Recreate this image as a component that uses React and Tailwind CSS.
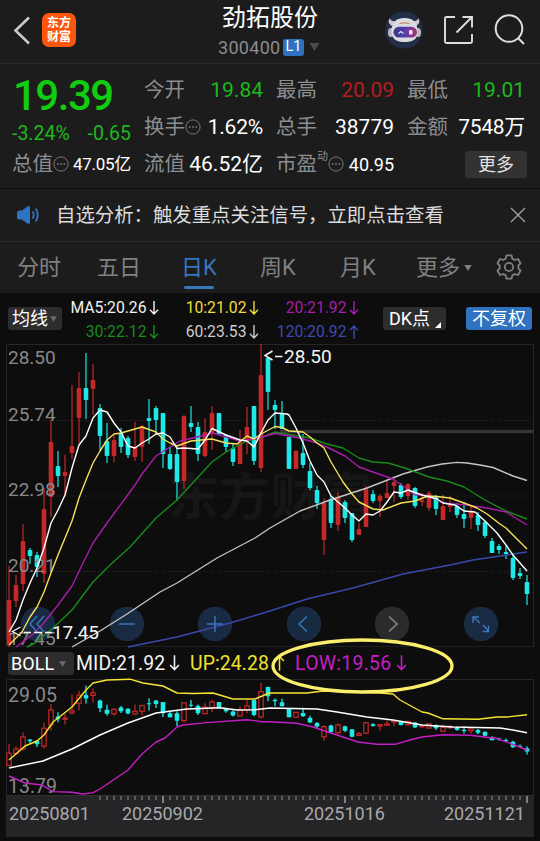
import { Fragment } from 'react';

// --- Data: 日K [direction, high, low, bodyTop, bodyBottom] in chart units ---
const CANDLES = [
  ['u', 566, 647, 600, 645], ['u', 575, 607, 585, 601], ['u', 524, 591, 541, 584], ['d', 548, 564, 550, 556],
  ['d', 552, 577, 555, 567], ['u', 488, 583, 509, 574], ['u', 420, 517, 442, 497], ['d', 451, 487, 466, 476],
  ['u', 455, 495, 472, 476], ['u', 385, 459, 446, 453], ['u', 372, 443, 388, 418], ['d', 353, 419, 388, 400],
  ['u', 364, 415, 380, 389], ['d', 404, 450, 408, 436], ['d', 423, 463, 441, 456], ['u', 435, 462, 440, 456],
  ['d', 428, 453, 433, 447], ['d', 436, 458, 438, 455], ['u', 422, 461, 447, 457], ['u', 425, 462, 426, 447],
  ['d', 399, 444, 418, 421], ['d', 406, 435, 408, 420], ['d', 413, 468, 413, 454], ['d', 447, 470, 454, 469],
  ['d', 447, 501, 454, 482], ['u', 415, 489, 416, 481], ['d', 406, 432, 423, 427], ['d', 422, 461, 427, 454],
  ['u', 418, 457, 432, 456], ['u', 406, 450, 413, 433], ['d', 413, 435, 413, 434], ['d', 434, 452, 435, 447],
  ['d', 443, 466, 448, 462], ['u', 430, 464, 442, 464], ['u', 407, 454, 427, 441], ['d', 406, 465, 406, 461],
  ['u', 344, 472, 375, 468], ['d', 357, 410, 358, 392], ['d', 400, 429, 405, 410], ['d', 401, 429, 414, 429],
  ['d', 437, 469, 437, 469], ['u', 450, 469, 451, 469], ['d', 434, 468, 453, 465], ['d', 463, 490, 471, 488],
  ['d', 486, 509, 490, 503], ['u', 498, 555, 503, 540], ['d', 496, 528, 499, 523], ['u', 492, 531, 497, 525],
  ['d', 500, 523, 502, 518], ['d', 513, 542, 513, 540], ['u', 523, 535, 529, 535], ['u', 486, 527, 489, 527],
  ['d', 490, 503, 494, 501], ['u', 494, 517, 496, 501], ['u', 480, 498, 493, 498], ['u', 479, 502, 482, 486],
  ['d', 483, 499, 485, 497], ['u', 483, 500, 484, 496], ['d', 487, 508, 488, 506], ['u', 493, 506, 500, 502],
  ['u', 491, 511, 493, 508], ['d', 495, 515, 497, 509], ['u', 495, 520, 506, 520], ['u', 496, 512, 503, 507],
  ['d', 503, 518, 506, 515], ['d', 502, 528, 514, 519], ['u', 506, 529, 511, 518], ['d', 512, 531, 515, 525],
  ['d', 521, 538, 522, 536], ['d', 538, 553, 541, 553], ['d', 544, 554, 546, 550], ['d', 546, 559, 552, 554],
  ['d', 555, 580, 558, 578], ['d', 568, 579, 573, 576], ['d', 575, 605, 582, 594],
];

const MA_LINES = [
  { color: '#3949ab', points: '128,647 177,637 230,623 270,611 307,599 353,588 403,574 450,565 473,560 527,552' },
  { color: '#c4c4c4', points: '72,647 100,631 127,614 160,592 177,583 217,558 255,538 270,528 300,511 330,500 367,488 403,474 427,467 442,464 457,462.4 467,463 480,465 493,467.5 513,476 527,480.5' },
  { color: '#1a8a1a', points: '27,647 35,643 53,628 72,610 93,582 110,565 130,547 156,518 177,500 200,475 212,462 226,452 247,441 263,437 275,432 289,434.5 310,438 327,444 343,448 359,458 373,462 388,463 405,468 429,477 447,481 464,487 485,500 506,511 527,519' },
  { color: '#a81ca8', points: '16,647 32,635 43,624 58,605 72,586 83,563 93,543 107,523 124,500 135,485 142,474 156,456 170,447 180,441 197,437 213,433 226,437 240,441 254,439 275,433.5 289,436 303,439 317,443 331,449 345,456 359,467 373,472 393,479 403,486 415,495 429,495.5 443,503 467,505 487,508 506,512 527,525' },
  { color: '#f5e05a', points: '9,645 22,632 30,617 37,607 44,592 51,573 58,555 65,538 72,521 79,498 86,480 93,463 100,451 107,440 114,434 121,433 142,427 156,432 163,439 170,443 177,446 191,441 212,439 226,443 237,444 247,436 254,439 261,434 275,426.5 282,427.5 289,431 303,432 310,437 317,443 324,448 331,462 343,482 352,494 359,502 373,509 383,510 401,503 415,501 428,496 437,496.5 450,498 464,503 477,508 487,514 500,524 506,528 520,542 527,549' },
  { color: '#ffffff', points: '9,632 16,620 23,600 30,583 37,568 44,548 51,523 58,510 65,495 72,468 79,445 86,436 93,418 100,410 107,412 114,423 121,432 128,446 135,448 142,443 149,439 156,434 163,433 170,437 177,448.5 184,448 198,449 205,440 212,428.5 226,435 240,440 247,441 254,447 261,433 268,420 275,413 287,414 289,415 296,428 303,443 310,461 317,475 324,482 331,496 338,502 345,508 352,515 359,521 366,514 373,515 380,511 387,502 394,492 401,493 408,490 422,495 437,499 443,503 455,505 464,511 475,512 485,521 497,533 506,545 513,555 527,571' },
];

const BOLL_LINES = [
  { color: '#f5e433', points: '9,760 17,753 25,746 37,741 44,735 53,722 72,707 86,690 93,683 107,680 130,679.2 143,683 163,686 177,693 193,693.5 213,693 233,699 255,699 267,694 270,693 307,693 323,691 380,693 393,694 400,700 422,712 428,713 443,718.8 478,719.3 497,717 507,717 527,714.8' },
  { color: '#ffffff', points: '9,768 43,761 72,749 100,735 128,723 156,713 187,709 220,707.7 237,710 255,709.7 270,708 317,709 337,712 367,717 393,720 422,725 453,727 500,728 513,730 527,732.8' },
  { color: '#c41fc4', points: '9,776 25,783 42,785 53,791.6 72,792.3 83,794 93,792.6 100,789 128,770 142,754 156,742 165,738 177,727 183,725 207,722.6 247,719.7 262,721.7 270,721.8 297,723.3 313,727 337,735 358,742 377,744.3 395,744.3 410,740 422,737 443,734.7 470,735.3 497,738.5 517,746 527,750' },
];

const RED = '#c62828';
const CYAN = '#1ee8e8';

const candleX = (i) => 9 + i * 7;
// 副圖刻度: main chart units squeezed into the BOLL pane
const toBoll = (y) => 588.8 + y * 0.274;

// --- Icons ---
const DownTriangle = ({ className }) => (
  <svg viewBox="0 0 10 8" className={className} fill="currentColor"><path d="M0 0h10L5 8z" /></svg>
);

const Arrow = ({ up, className }) => (
  <svg viewBox="0 0 10 14" className={className} fill="none" stroke="currentColor" strokeWidth="1.4">
    <path d={up ? 'M5 14V1M1 5.2 5 1l4 4.2' : 'M5 0v13M1 8.8 5 13l4-4.2'} />
  </svg>
);

const Dots = () => (
  <svg viewBox="0 0 16 16" className="h-4 w-4 shrink-0 text-[#77777a]" fill="currentColor">
    <circle cx="8" cy="8" r="7.1" fill="none" stroke="currentColor" strokeWidth="1" />
    <circle cx="4.7" cy="8" r="0.9" /><circle cx="8" cy="8" r="0.9" /><circle cx="11.3" cy="8" r="0.9" />
  </svg>
);

const Robot = () => (
  <svg viewBox="0 0 38 38" className="h-[38px] w-[38px]">
    <defs>
      <linearGradient id="visor" x1="0" x2="1">
        <stop offset="0" stopColor="#33397f" />
        <stop offset="0.5" stopColor="#5a3bb0" />
        <stop offset="1" stopColor="#a83268" />
      </linearGradient>
    </defs>
    <circle cx="19" cy="19" r="18.6" fill="#232f47" />
    <path d="M7 15C3.500 13 3 10 4.500 7.500 6 9.500 8 10.500 11 10.500zM31 15C34.500 13 35 10 33.500 7.500 32 9.500 30 10.500 27 10.500z" fill="#c9c9cf" />
    <ellipse cx="6" cy="21.500" rx="3" ry="4.500" fill="#b9b9c2" />
    <ellipse cx="33" cy="21.500" rx="3" ry="4.500" fill="#b9b9c2" />
    <path d="M6.500 20C6.500 10.500 12 7 19.500 7S32.500 10.500 32.500 20 27 31 19.500 31 6.500 28.500 6.500 20z" fill="#dcdbe0" />
    <path d="M14.500 12.500q5-1.200 10 0" fill="none" stroke="#c58a62" strokeWidth="1.2" />
    <rect x="8.500" y="15.800" width="23.500" height="10.800" rx="5.400" fill="url(#visor)" />
    <path d="M13.500 22.500l2.500-2 2.500 2" fill="none" stroke="#d9e2ff" strokeWidth="1.3" />
    <rect x="24" y="19" width="3.600" height="4.500" rx="0.8" fill="#f1dff5" />
  </svg>
);

const Header = () => (
  <header className="grid h-16 grid-cols-[200px_140px_200px] border-b border-[#2a2a2b]">
    <div className="flex items-start pl-[13px] pt-[13px]">
      <svg viewBox="0 0 18 34" className="h-[34px] w-[18px]" fill="none" stroke="#c9c9c9" strokeWidth="2.6">
        <path d="M16 4.500 2.500 17.500 16 30.500" />
      </svg>
      <div className="ml-[11px] flex h-[34px] w-[34px] flex-col items-center justify-center rounded-[7px] bg-[#fb560d] text-[12px] font-bold leading-[14px] text-white">
        <span>东方</span>
        <span>财富</span>
      </div>
    </div>
    <div className="flex flex-col items-center">
      <h1 className="mt-[3px] text-[24px] leading-[31px] text-white">劲拓股份</h1>
      <div className="flex h-[26px] w-full items-center pl-[18px]">
        <span className="w-[65px] text-[18px] tracking-[0.3px] text-[#8b8b8e]">300400</span>
        <span className="flex h-[17px] w-[21px] items-center justify-center rounded-[3px] bg-[#2f72c0] text-[14.5px] text-white">L1</span>
        <DownTriangle className="ml-[5px] h-[8px] w-[11px] text-[#4b4b4d]" />
      </div>
    </div>
    <div className="flex items-start pl-[44.5px] pt-[11px]">
      <Robot />
      <svg viewBox="0 0 32 32" className="ml-[19px] mt-[3px] h-8 w-8" fill="none" stroke="#dedede" strokeWidth="1.9">
        <path d="M13 3H4.500Q3 3 3 4.500V27.500Q3 29 4.500 29H28.500Q30 29 30 27.500V20M20.500 3H30V13.500M30 3 14.500 18.500" />
      </svg>
      <svg viewBox="0 0 32 32" className="ml-[19.5px] mt-[3px] h-8 w-8 shrink-0" fill="none" stroke="#dedede" strokeWidth="2">
        <circle cx="16" cy="14.500" r="13.300" />
        <path d="M25 24 31 30" />
      </svg>
    </div>
  </header>
);

const Stat = ({ label, value, color = 'text-white', size = 'text-[21px]', dots, sup }) => (
  <div className="flex h-[37px] items-center justify-between whitespace-nowrap">
    <span className="flex items-center text-[20.5px] text-[#8d8d91]">
      {label}
      {sup && <sup className="-top-2 text-[11px] leading-none">{sup}</sup>}
      {dots && <span className="mb-0.5"><Dots /></span>}
    </span>
    <span className={`${color} ${size}`}>{value}</span>
  </div>
);

const Quote = () => (
  <section className="flex h-[125px] border-b border-[#111112] pl-3 pt-[8px]">
    <div className="w-[119px]">
      <div className="h-[49px] text-[42px] font-medium leading-[48px] tracking-[-1.5px] text-[#11cc11]"><span className="ml-px">19.39</span></div>
      <div className="flex h-[25px] items-center justify-between whitespace-nowrap text-[19.5px] text-[#1db81d]">
        <span>-3.24%</span>
        <span>-0.65</span>
      </div>
      <Stat label="总值" value="47.05亿" dots size="text-[17px] tracking-[-0.3px]" />
    </div>
    <div className="ml-[13px] grid h-[111px] grid-cols-[119px_118px_118px] gap-x-[13px]">
      <Stat label="今开" value="19.84" color="text-[#1db81d]" />
      <Stat label="最高" value="20.09" color="text-[#b71c1c]" />
      <Stat label="最低" value="19.01" color="text-[#1db81d]" />
      <Stat label="换手" value="1.62%" dots size="text-[21px] tracking-[-0.2px]" />
      <Stat label="总手" value="38779" />
      <Stat label="金额" value="7548万" size="text-[21px] tracking-[-0.3px]" />
      <Stat label="流值" value="46.52亿" />
      <Stat label="市盈" value="40.95" dots sup="动" size="text-[18px]" />
      <div className="flex items-center justify-end">
        <button className="mr-[-2px] h-[27px] w-[62px] rounded-[3px] bg-[#323233] text-[18px] leading-none text-[#e2e2e2]">更多</button>
      </div>
    </div>
  </section>
);

const Notice = () => (
  <section className="flex h-[53px] items-center border-b border-[#2a2a2b] pl-[17px]">
    <svg viewBox="0 0 24 20" className="h-5 w-6" fill="#2f74c4">
      <path d="M0 8Q0 5.500 2.500 5.500H5L10.500 1.500Q13 .2 13 3V17Q13 19.800 10.500 18.500L5 14.500H2.500Q0 14.500 0 12z" />
      <path d="M15.500 6.500q2.500 3.500 0 7M18.500 3.500q4.500 6.500 0 13" fill="none" stroke="#2f74c4" strokeWidth="1.8" />
    </svg>
    <p className="ml-[15px] w-[454px] whitespace-nowrap pt-px text-[19.4px] text-[#dcdcdc]">自选分析：触发重点关注信号，立即点击查看</p>
    <svg viewBox="0 0 16 16" className="h-4 w-4" stroke="#a0a0a2" strokeWidth="1.4"><path d="M1 1l14 14M15 1 1 15" /></svg>
  </section>
);

const TABS = [
  { name: '分时', width: 'w-[80px]' },
  { name: '五日', width: 'w-[84px]' },
  { name: '日K', width: 'w-[79px]', active: true },
  { name: '周K', width: 'w-[80px]' },
  { name: '月K', width: 'w-[76px]' },
];

const Tabs = () => (
  <nav className="flex h-[51px] pl-[17px] text-[22px] text-[#808083]">
    {TABS.map(({ name, width, active }) => (
      <div key={name} className={`${width} ${active ? 'text-[#3877c0]' : ''}`}>
        <div className="h-[44px] leading-[51px]">{name}</div>
        {active && <div className="ml-[3px] h-[3px] w-[30px] rounded-full bg-[#3877c0]" />}
      </div>
    ))}
    <div className="flex h-[51px] w-[80px] items-center">
      更多
      <DownTriangle className="ml-[4px] h-[6px] w-[8px]" />
    </div>
    <svg viewBox="0 0 26 26" className="mt-[12px] h-[26px] w-[26px]" fill="none" stroke="currentColor" strokeWidth="1.8" strokeLinejoin="round">
      <path d="M10.500 1.300H15.500L16.300 4.600 18.800 6 22 5 24.500 9.300 22.300 11.700V14.300L24.500 16.700 22 21 18.800 20 16.300 21.400 15.500 24.700H10.500L9.700 21.400 7.200 20 4 21 1.500 16.700 3.700 14.300V11.700L1.500 9.300 4 5 7.200 6 9.700 4.600z" />
      <circle cx="13" cy="13" r="4.200" />
    </svg>
  </nav>
);

const AVERAGES = [
  { text: 'MA5:20.26', color: 'text-[#f2f2f2]' },
  { text: '10:21.02', color: 'text-[#f0dc3c]' },
  { text: '20:21.92', color: 'text-[#a81ca8]' },
  { text: '30:22.12', color: 'text-[#1a8a1a]' },
  { text: '60:23.53', color: 'text-[#cccccc]' },
  { text: '120:20.92', color: 'text-[#3c4ab0]', up: true },
];

const Averages = () => (
  <section className="flex h-[51px] items-center bg-[#0d0d0d] pl-2">
    <button className="flex h-[23px] w-[54px] items-center rounded-[3px] bg-[#2d2d2e] pl-[4px] text-[18px] leading-none text-white">
      均线
      <DownTriangle className="ml-[2px] h-[6px] w-[7px] text-[#6a6a6c]" />
    </button>
    <div className="grid h-[48px] grid-cols-[97px_100px_100px]">
      {AVERAGES.map(({ text, color, up }) => (
        <div key={text} className={`flex h-6 items-center justify-end pt-0.5 text-[15.7px] ${color}`}>
          {text}
          <Arrow up={up} className="ml-[2.5px] h-[14px] w-[10px]" />
        </div>
      ))}
    </div>
    <button className="ml-[24px] flex h-[23px] w-[63px] items-center rounded-[3px] bg-[#2d2d2e] pl-[6px] text-[18px] leading-none text-white">
      DK点
      <svg viewBox="0 0 6 6" className="ml-[5px] mt-[12px] h-[6px] w-[6px]" fill="white"><path d="M6 0v6H0z" /></svg>
    </button>
    <button className="ml-[20px] flex h-[23px] w-[66px] items-center justify-center rounded-[3px] bg-[#2f72c0] text-[18px] leading-none text-white">不复权</button>
  </section>
);

const BUTTONS = [
  { x: 38, icon: 'M37 616 30 624 37 632M44 616 37 624 44 632' },
  { x: 127, icon: 'M119 624H135' },
  { x: 215, icon: 'M207 624H223M215 616V632' },
  { x: 304, icon: 'M307 616.500 299 624 307 631.500' },
  { x: 392, icon: 'M389 616.500 397 624 389 631.500', muted: true },
  { x: 481, icon: 'M473 623V617H479M473 617 480 623M483 625 488.500 631M482.500 631.500H488.500V625.500' },
];

const KChart = () => (
  <svg viewBox="0 344 540 304" className="block h-[304px] w-[540px] overflow-visible" fontFamily="Roboto, sans-serif">
    <text x="168" y="515" fontSize="51" fontWeight="700" fill="#161616" fontFamily="Noto Sans CJK SC, sans-serif">东方财富</text>
    <path d="M6.500 647V344.500H533.500V647" fill="none" stroke="#262627" />
    <path d="M6 646.500H534" stroke="#202021" />
    <path d="M7 420.500H533M7 496H533M7 571.500H533" stroke="#1c1c1d" strokeDasharray="5 2" />
    <path d="M280 431.500H533" stroke="#343434" strokeWidth="3.5" />
    {CANDLES.map(([dir, high, low, top, bottom], i) => {
      const x = candleX(i);
      const color = dir === 'u' ? RED : CYAN;
      return (
        <Fragment key={i}>
          <path d={`M${x} ${high}V${low}`} stroke={color} strokeWidth="1.6" opacity="0.75" />
          <rect x={x - 2.3} y={top} width="4.6" height={bottom - top} rx="0.8" fill={color} />
        </Fragment>
      );
    })}
    {BUTTONS.map(({ x, muted }) => (
      <circle key={x} cx={x} cy="624" r="17.200" fill={muted ? '#2b2b2b' : '#192b42'} />
    ))}
    <g fill="#88888a" fontSize="19">
      <text x="8" y="363.500">28.50</text>
      <text x="8" y="420.500">25.74</text>
      <text x="8" y="496">22.98</text>
      <text x="8" y="572">20.21</text>
      <text x="8" y="645">17.45</text>
    </g>
    {MA_LINES.map(({ color, points }) => (
      <polyline key={color} points={points} fill="none" stroke={color} strokeWidth="1.4" strokeLinejoin="round" />
    ))}
    {BUTTONS.map(({ x, icon, muted }) => (
      <path key={x} d={icon} fill="none" stroke={muted ? '#8d8d8d' : '#3a78bd'} strokeWidth="1.4" />
    ))}
    <g fill="#f5f5f5" fontSize="19">
      <path d="M272.500 351 265 355.500 272.500 360M275 356.500H282.500" fill="none" stroke="#f5f5f5" strokeWidth="1.5" />
      <text x="284" y="362.500">28.50</text>
      <path d="M20.500 627 12.500 631.500 20.500 636M24 632.500H31M34 632.500H42M45 632.500H52" fill="none" stroke="#f5f5f5" strokeWidth="1.4" />
      <text x="52" y="638.500" textLength="47">17.45</text>
    </g>
  </svg>
);

const BollRow = () => (
  <section className="flex h-[31px] items-center bg-[#0d0d0d] pl-2 text-[19.4px] tracking-[0.1px]">
    <button className="flex h-[23px] w-[66px] items-center rounded-[3px] bg-[#2d2d2e] pl-[3px] text-[18px] leading-none text-white">
      BOLL
      <DownTriangle className="ml-[5px] h-[6px] w-[7px] text-[#6a6a6c]" />
    </button>
    <span className="flex w-[116px] items-center pl-[2px] text-[#f2f2f2]">MID:21.92<Arrow className="ml-[4px] h-4 w-[11px]" /></span>
    <span className="flex w-[105px] items-center text-[#f0e02c]">UP:24.28<Arrow up className="ml-[5px] h-4 w-[11px]" /></span>
    <span className="flex items-center tracking-[0.3px] text-[#c41fc4]">LOW:19.56<Arrow className="ml-[5px] h-4 w-[11px]" /></span>
  </section>
);

const BollChart = () => (
  <svg viewBox="0 679 540 116" className="block h-[116px] w-[540px] overflow-visible" fontFamily="Roboto, sans-serif">
    <path d="M6.500 795V679.500H533.500V795" fill="none" stroke="#262627" />
    {CANDLES.map(([dir, high, low, top, bottom], i) => {
      const x = candleX(i);
      const [h, l, t, b] = [high, low, top, bottom].map(toBoll);
      const height = Math.max(b - t, 1);
      return dir === 'u' ? (
        <g key={i} fill="none" stroke={RED} strokeWidth="1.2">
          <path d={`M${x} ${h}V${t}M${x} ${t + height}V${l}`} />
          <rect x={x - 2.2} y={t} width="4.4" height={height} />
        </g>
      ) : (
        <g key={i}>
          <path d={`M${x} ${h}V${l}`} stroke={CYAN} strokeWidth="1.3" />
          <rect x={x - 2.3} y={t} width="4.6" height={height} rx="0.6" fill={CYAN} />
        </g>
      );
    })}
    <g fill="#88888a" fontSize="19.5">
      <text x="8" y="701.500">29.05</text>
      <text x="8" y="792.500">13.79</text>
    </g>
    {BOLL_LINES.map(({ color, points }) => (
      <polyline key={color} points={points} fill="none" stroke={color} strokeWidth="1.4" strokeLinejoin="round" />
    ))}
  </svg>
);

const DateAxis = () => (
  <footer className="ml-[6px] h-[42px] w-[528px] bg-[#252527] text-[18px] text-[#a9a9ab]">
    <svg viewBox="6 795 528 9" className="block h-[9px] w-[528px]" stroke="#a9a9ab">
      <path d="M6 795H534" stroke="#38383a" />
      {CANDLES.map((_, i) => {
        if (i < 13) return null;
        const major = i === 22 || i === 48 || i === 74;
        return <path key={i} d={`M${candleX(i)} 796V${major ? 803 : 800}`} strokeWidth={major ? 1.4 : 0.8} />;
      })}
    </svg>
    <div className="flex h-[18px] items-center pl-[3px]">
      <span className="w-[113px]">20250801</span>
      <span className="w-[182px]">20250902</span>
      <span className="w-[140px]">20251016</span>
      <span>20251121</span>
    </div>
  </footer>
);

export default function App() {
  return (
    <div className="relative h-[841px] w-[540px] overflow-hidden bg-[#0d0d0d] font-[Roboto,'Noto_Sans_CJK_SC',sans-serif]">
      <div className="bg-[#1c1c1c]">
        <Header />
        <Quote />
        <Notice />
        <Tabs />
      </div>
      <Averages />
      {/* both chart panes share one x scale */}
      <KChart />
      <BollRow />
      <BollChart />
      <DateAxis />
      <svg viewBox="0 0 190 60" className="absolute left-[268px] top-[636px] h-[60px] w-[190px]" fill="none" stroke="#faee6c" strokeWidth="3.3">
        <ellipse cx="94.500" cy="30" rx="89.500" ry="26" />
      </svg>
    </div>
  );
}
